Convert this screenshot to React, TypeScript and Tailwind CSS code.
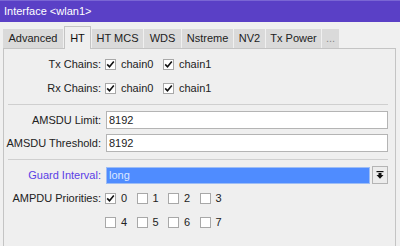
import React from 'react';

const font = { fontFamily: '"Liberation Sans", Arial, sans-serif' };

const tabs = [
  { label: 'Advanced', w: 'w-[60px]' },
  { label: 'HT', w: 'w-[27px]', active: true },
  { label: 'HT MCS', w: 'w-[51px]' },
  { label: 'WDS', w: 'w-[37px]' },
  { label: 'Nstreme', w: 'w-[51px]' },
  { label: 'NV2', w: 'w-[31px]' },
  { label: 'Tx Power', w: 'w-[55px]' },
  { label: '...', w: 'w-[17px]' },
];

const Check: React.FC<{ checked?: boolean; label: string; w?: string }> = ({ checked, label, w }) => (
  <div className={`flex items-center shrink-0 ${w ?? 'w-[31.5px]'}`}>
    <div className="w-[11px] h-[11px] bg-white border border-[#a8a8a8] flex items-center justify-center">
      {checked && (
        <svg width="9" height="9" viewBox="0 0 9 9">
          <path d="M1.2 4.4 L3.5 6.8 L7.8 1.6" fill="none" stroke="#111" strokeWidth="1.6" />
        </svg>
      )}
    </div>
    <span className="ml-[5px]">{label}</span>
  </div>
);

const Label: React.FC<{ children: React.ReactNode; className?: string }> = ({ children, className }) => (
  <div className={`w-[98px] shrink-0 text-right pr-px ${className ?? ''}`}>{children}</div>
);

const Separator = () => <div className="h-px bg-[#cfcfcf] ml-[4px] mr-[7px]" />;

export default function App() {
  return (
    <div className="w-[400px] h-[246px] bg-[#f0f0f0] text-[11px] text-[#222] overflow-hidden flex flex-col" style={font}>
      {/* Title bar */}
      <div className="h-[22px] bg-[#5a40c6] border-t border-[#7a66d4] text-white flex items-center pl-[4px] shrink-0">
        Interface &lt;wlan1&gt;
      </div>

      {/* Tabs */}
      <div className="flex items-end gap-px pl-[3px] h-[24px] mt-[2px] shrink-0">
        {tabs.map((t) =>
          t.active ? (
            <div
              key={t.label}
              className={`${t.w} h-[23px] bg-[#efefef] border-t border-l border-r border-[#c4c4c4] flex items-start justify-center pt-[3px] text-[#111] relative top-px z-10`}
            >
              {t.label}
            </div>
          ) : (
            <div
              key={t.label}
              className={`${t.w} h-[19px] bg-[#dadada] flex items-center justify-center ${t.label === '...' ? 'text-[#888]' : ''}`}
            >
              {t.label}
            </div>
          )
        )}
      </div>

      {/* Panel */}
      <div className="flex-1 mx-[3px] mr-[4px] bg-[#efefef] border-t border-l border-r border-[#c4c4c4] flex flex-col pt-[3px]">
        {['Tx Chains:', 'Rx Chains:'].map((l) => (
          <div key={l} className="flex items-center h-[24px]">
            <Label>{l}</Label>
            <div className="flex items-center ml-[3px]">
              <Check checked label="chain0" w="w-[58px]" />
              <Check checked label="chain1" w="w-[58px]" />
            </div>
          </div>
        ))}

        <div className="mt-[4px]">
          <Separator />
        </div>

        <div className="flex items-center h-[18px] mt-[6px] pr-[7px]">
          <Label>AMSDU Limit:</Label>
          <div className="flex-1 ml-[4px] h-[18px] bg-white border border-[#b4b4b4] flex items-center pl-[2px]">8192</div>
        </div>
        <div className="flex items-center h-[18px] mt-[5px] pr-[7px]">
          <Label>AMSDU Threshold:</Label>
          <div className="flex-1 ml-[4px] h-[18px] bg-white border border-[#b4b4b4] flex items-center pl-[2px]">8192</div>
        </div>

        <div className="mt-[7px]">
          <Separator />
        </div>

        <div className="flex items-center h-[18px] mt-[6px] pr-[7px]">
          <Label className="text-[#5a3ee6]">Guard Interval:</Label>
          <div className="flex-1 ml-[4px] h-[17px] bg-[#4f8cff] border border-[#9dbdf5] flex items-center pl-[2px] text-[#dce8ff]">
            long
          </div>
          <div className="w-[16px] h-[18px] ml-[2px] bg-[#ececec] border border-[#b4b4b4] flex items-center justify-center">
            <svg width="8" height="8" viewBox="0 0 8 8">
              <rect x="0.5" y="0" width="7" height="1.2" fill="#111" />
              <path d="M2.5 2 H5.5 V4 H7.5 L4 7.8 L0.5 4 H2.5 Z" fill="#111" />
            </svg>
          </div>
        </div>

        <div className="flex items-center h-[24px] mt-[2px]">
          <Label>AMPDU Priorities:</Label>
          <div className="flex items-center ml-[3px]">
            <Check checked label="0" />
            <Check label="1" />
            <Check label="2" />
            <Check label="3" />
          </div>
        </div>
        <div className="flex items-center h-[24px]">
          <Label>{''}</Label>
          <div className="flex items-center ml-[3px]">
            <Check label="4" />
            <Check label="5" />
            <Check label="6" />
            <Check label="7" />
          </div>
        </div>
      </div>
    </div>
  );
}
